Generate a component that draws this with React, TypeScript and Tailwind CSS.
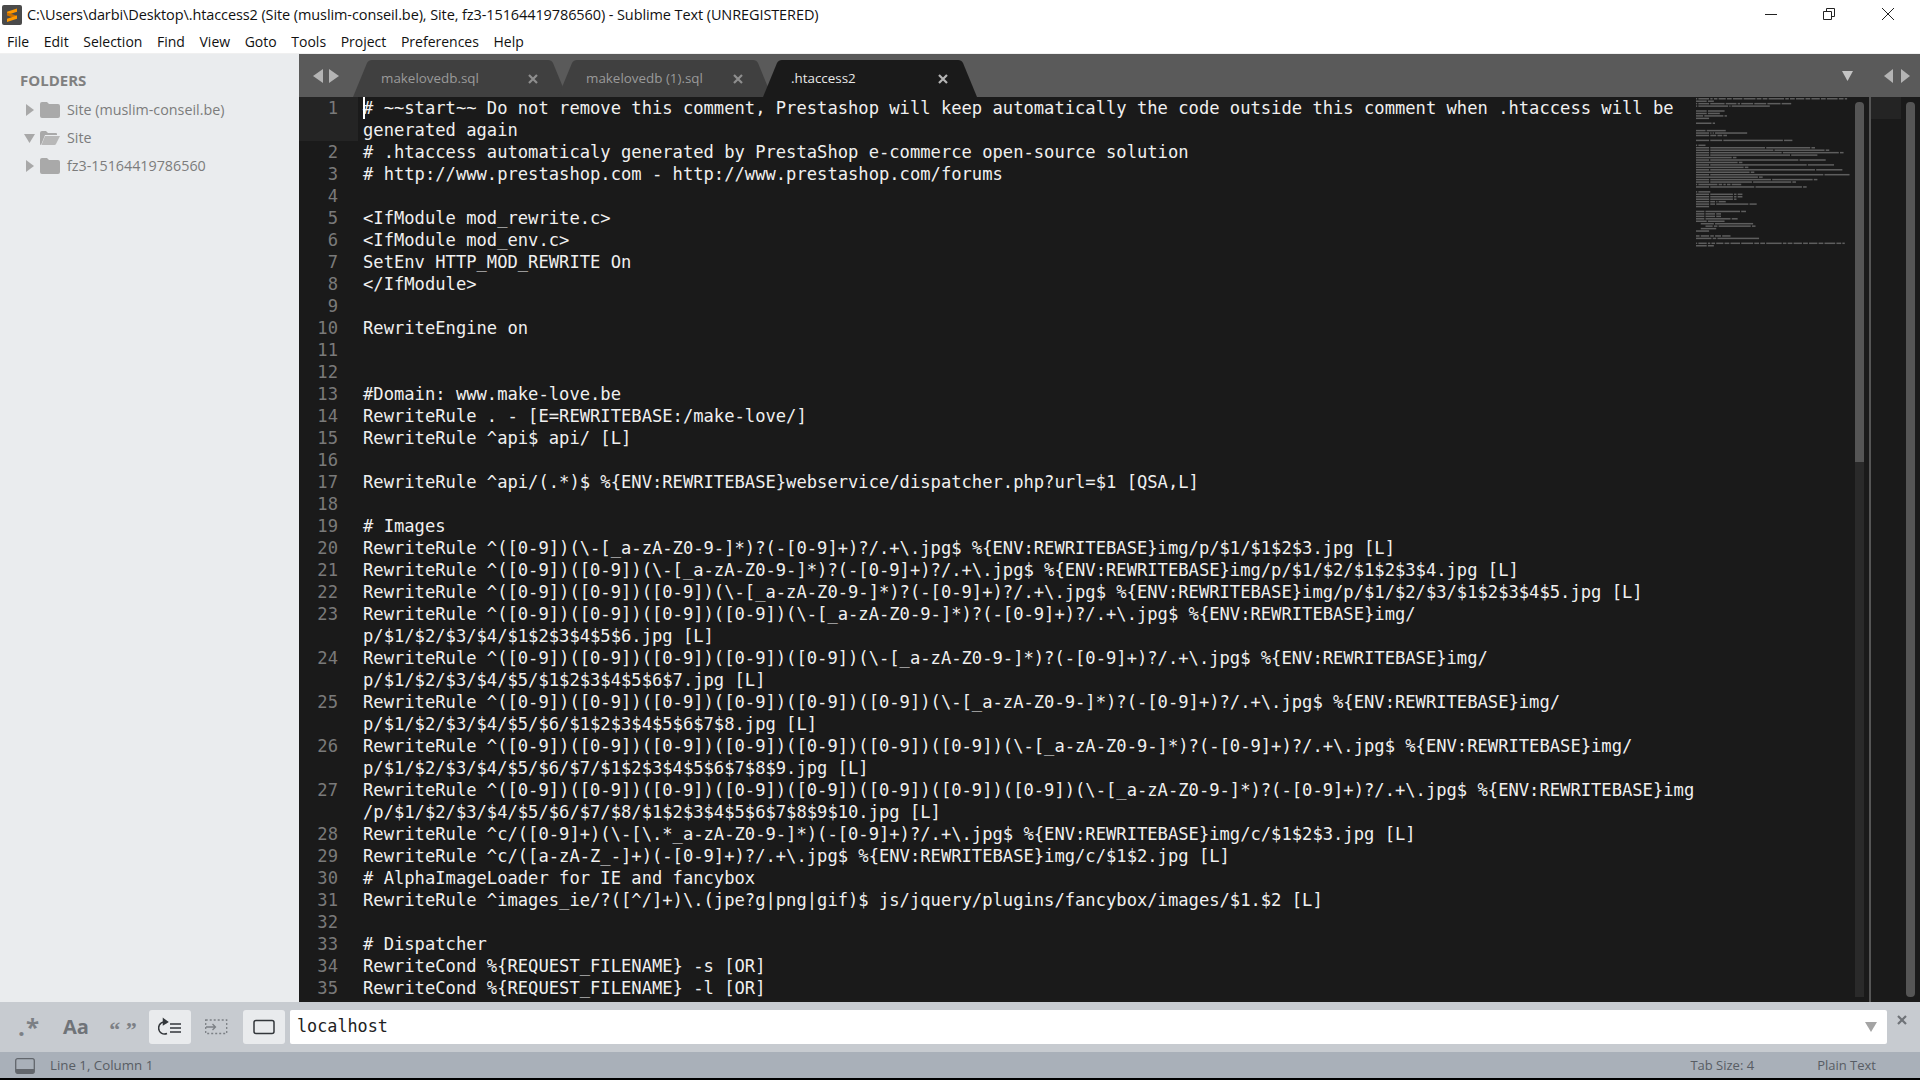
import React from 'react';

type Row = { n?: number; text: string };

// every visual row of the file, wrapped where the editor wraps it
const ROWS: Row[] = [
    { n: 1, text: '# ~~start~~ Do not remove this comment, Prestashop will keep automatically the code outside this comment when .htaccess will be' },
    { text: 'generated again' },
    { n: 2, text: '# .htaccess automaticaly generated by PrestaShop e-commerce open-source solution' },
    { n: 3, text: '# http://www.prestashop.com - http://www.prestashop.com/forums' },
    { n: 4, text: '' },
    { n: 5, text: '<IfModule mod_rewrite.c>' },
    { n: 6, text: '<IfModule mod_env.c>' },
    { n: 7, text: 'SetEnv HTTP_MOD_REWRITE On' },
    { n: 8, text: '</IfModule>' },
    { n: 9, text: '' },
    { n: 10, text: 'RewriteEngine on' },
    { n: 11, text: '' },
    { n: 12, text: '' },
    { n: 13, text: '#Domain: www.make-love.be' },
    { n: 14, text: 'RewriteRule . - [E=REWRITEBASE:/make-love/]' },
    { n: 15, text: 'RewriteRule ^api$ api/ [L]' },
    { n: 16, text: '' },
    { n: 17, text: 'RewriteRule ^api/(.*)$ %{ENV:REWRITEBASE}webservice/dispatcher.php?url=$1 [QSA,L]' },
    { n: 18, text: '' },
    { n: 19, text: '# Images' },
    { n: 20, text: 'RewriteRule ^([0-9])(\\-[_a-zA-Z0-9-]*)?(-[0-9]+)?/.+\\.jpg$ %{ENV:REWRITEBASE}img/p/$1/$1$2$3.jpg [L]' },
    { n: 21, text: 'RewriteRule ^([0-9])([0-9])(\\-[_a-zA-Z0-9-]*)?(-[0-9]+)?/.+\\.jpg$ %{ENV:REWRITEBASE}img/p/$1/$2/$1$2$3$4.jpg [L]' },
    { n: 22, text: 'RewriteRule ^([0-9])([0-9])([0-9])(\\-[_a-zA-Z0-9-]*)?(-[0-9]+)?/.+\\.jpg$ %{ENV:REWRITEBASE}img/p/$1/$2/$3/$1$2$3$4$5.jpg [L]' },
    { n: 23, text: 'RewriteRule ^([0-9])([0-9])([0-9])([0-9])(\\-[_a-zA-Z0-9-]*)?(-[0-9]+)?/.+\\.jpg$ %{ENV:REWRITEBASE}img/' },
    { text: 'p/$1/$2/$3/$4/$1$2$3$4$5$6.jpg [L]' },
    { n: 24, text: 'RewriteRule ^([0-9])([0-9])([0-9])([0-9])([0-9])(\\-[_a-zA-Z0-9-]*)?(-[0-9]+)?/.+\\.jpg$ %{ENV:REWRITEBASE}img/' },
    { text: 'p/$1/$2/$3/$4/$5/$1$2$3$4$5$6$7.jpg [L]' },
    { n: 25, text: 'RewriteRule ^([0-9])([0-9])([0-9])([0-9])([0-9])([0-9])(\\-[_a-zA-Z0-9-]*)?(-[0-9]+)?/.+\\.jpg$ %{ENV:REWRITEBASE}img/' },
    { text: 'p/$1/$2/$3/$4/$5/$6/$1$2$3$4$5$6$7$8.jpg [L]' },
    { n: 26, text: 'RewriteRule ^([0-9])([0-9])([0-9])([0-9])([0-9])([0-9])([0-9])(\\-[_a-zA-Z0-9-]*)?(-[0-9]+)?/.+\\.jpg$ %{ENV:REWRITEBASE}img/' },
    { text: 'p/$1/$2/$3/$4/$5/$6/$7/$1$2$3$4$5$6$7$8$9.jpg [L]' },
    { n: 27, text: 'RewriteRule ^([0-9])([0-9])([0-9])([0-9])([0-9])([0-9])([0-9])([0-9])(\\-[_a-zA-Z0-9-]*)?(-[0-9]+)?/.+\\.jpg$ %{ENV:REWRITEBASE}img' },
    { text: '/p/$1/$2/$3/$4/$5/$6/$7/$8/$1$2$3$4$5$6$7$8$9$10.jpg [L]' },
    { n: 28, text: 'RewriteRule ^c/([0-9]+)(\\-[\\.*_a-zA-Z0-9-]*)(-[0-9]+)?/.+\\.jpg$ %{ENV:REWRITEBASE}img/c/$1$2$3.jpg [L]' },
    { n: 29, text: 'RewriteRule ^c/([a-zA-Z_-]+)(-[0-9]+)?/.+\\.jpg$ %{ENV:REWRITEBASE}img/c/$1$2.jpg [L]' },
    { n: 30, text: '# AlphaImageLoader for IE and fancybox' },
    { n: 31, text: 'RewriteRule ^images_ie/?([^/]+)\\.(jpe?g|png|gif)$ js/jquery/plugins/fancybox/images/$1.$2 [L]' },
    { n: 32, text: '' },
    { n: 33, text: '# Dispatcher' },
    { n: 34, text: 'RewriteCond %{REQUEST_FILENAME} -s [OR]' },
    { n: 35, text: 'RewriteCond %{REQUEST_FILENAME} -l [OR]' },
    { text: 'RewriteCond %{REQUEST_FILENAME} -d' },
    { text: 'RewriteRule ^.*$ - [NC,L]' },
    { text: 'RewriteRule ^.*$ %{ENV:REWRITEBASE}index.php [NC,L]' },
    { text: '</IfModule>' },
    { text: '' },
    { text: 'AddType application/vnd.ms-fontobject .eot' },
    { text: 'AddType font/ttf .ttf' },
    { text: 'AddType font/otf .otf' },
    { text: 'AddType application/font-woff .woff' },
    { text: '<IfModule mod_headers.c>' },
    { text: '    <FilesMatch "\\.(ttf|ttc|otf|eot|woff|svg)$">' },
    { text: '        Header add Access-Control-Allow-Origin "*"' },
    { text: '    </FilesMatch>' },
    { text: '</IfModule>' },
    { text: '' },
    { text: '#If rewrite mod isn\'t enabled' },
    { text: 'ErrorDocument 404 /make-love/index.php?controller=404' },
    { text: '' },
    { text: '# ~~end~~ Do not remove this comment, Prestashop will keep automatically the code outside this comment when .htaccess will be' },
    { text: 'generated again' },
];

const VISIBLE_ROWS = 41;
const MENU = ['File', 'Edit', 'Selection', 'Find', 'View', 'Goto', 'Tools', 'Project', 'Preferences', 'Help'];

const CloseX: React.FC<{ className?: string }> = ({ className }) => (
    <svg width="10" height="10" viewBox="0 0 10 10" className={className}>
        <path d="M1 1l8 8M9 1l-8 8" stroke="currentColor" strokeWidth="2.2" fill="none" />
    </svg>
);

const Tab: React.FC<{ label: string; active?: boolean }> = ({ label, active }) => (
    <div className="relative w-[214px] h-[37px] -mr-[9px] flex items-center shrink-0">
        <svg width="214" height="37" viewBox="0 0 214 37" className={`absolute inset-0 ${active ? 'text-[#1a1a1a]' : 'text-[#404040]'}`}>
            <path d="M0 37L14 3Q15.5 0 19 0H195Q198.5 0 200 3L214 37Z" fill="currentColor" />
        </svg>
        <span className={`relative ml-[28px] w-[147px] text-[13.4px] ${active ? 'text-[#e8e8e8]' : 'text-[#9a9a9a]'}`}>{label}</span>
        <CloseX className={`relative ${active ? 'text-[#b4b4b4]' : 'text-[#8e8e8e]'}`} />
    </div>
);

const FolderRow: React.FC<{ label: string; open?: boolean }> = ({ label, open }) => (
    <div className="h-[28px] flex items-center pl-[24px] text-[14.3px] text-[#7c7c7c]">
        {open ? (
            <svg width="11" height="10" viewBox="0 0 11 10" className="mr-[5px]"><path d="M0 1h11L5.5 10z" fill="#a8a8a8" /></svg>
        ) : (
            <svg width="11" height="12" viewBox="0 0 11 12" className="mr-[5px]"><path d="M2 0l8 6-8 6z" fill="#a8a8a8" /></svg>
        )}
        {open ? (
            <svg width="20" height="16" viewBox="0 0 20 16" className="mr-[7px]">
                <path d="M0 3q0-2 2-2h4l2 2h8q1 0 1 1v1H5L1 15H1q-1 0-1-1z" fill="#a9a9a9" />
                <path d="M5 6h15l-4 8q-.5 1-1.500 1H1.500z" fill="#b8b8b8" />
            </svg>
        ) : (
            <svg width="20" height="16" viewBox="0 0 20 16" className="mr-[7px]">
                <path d="M0 2q0-2 2-2h5l2 2h9q2 0 2 2v10q0 2-2 2H2q-2 0-2-2z" fill="#a9a9a9" />
            </svg>
        )}
        <span>{label}</span>
    </div>
);

const Minimap: React.FC = () => (
    <svg width="159" height="905" viewBox="0 0 159 905" className="shrink-0">
        {ROWS.map((row, i) => {
            const parts: React.ReactNode[] = [];
            const re = /\S+/g;
            let m: RegExpExecArray | null;
            while ((m = re.exec(row.text))) {
                parts.push(<rect key={m.index} x={m.index * 1.19} y={i * 2.45 + 1} width={m[0].length * 1.19} height="1.5" fill="#8c8c8c" opacity="0.6" />);
            }
            return <g key={i}>{parts}</g>;
        })}
    </svg>
);

const FindToggle: React.FC<{ on?: boolean; children: React.ReactNode }> = ({ on, children }) => (
    <div className={`w-[42px] h-[34px] rounded-[3px] flex items-center justify-center shrink-0 ${on ? 'bg-[#e9ebed]' : ''}`}>{children}</div>
);

const App: React.FC = () => (
    <div className="w-[1920px] h-[1080px] overflow-hidden flex flex-col bg-black font-['Open_Sans',sans-serif]">
        {/* title bar */}
        <div className="h-[29px] bg-white flex items-center shrink-0">
            <svg width="20" height="20" viewBox="0 0 20 20" className="ml-[2px] mr-[5px]">
                <rect width="20" height="20" rx="2" fill="#4a4a4a" />
                <path d="M15 3.500v3.200L5 10V6.800z" fill="#ff9800" />
                <path d="M5 7.500l10 3.300v3L5 10.500z" fill="#c96f00" />
                <path d="M15 10.500v3.200L5 17v-3.200z" fill="#ff9800" />
            </svg>
            <span className="text-[14.5px] text-[#111] tracking-[-0.1px] whitespace-pre">C:\Users\darbi\Desktop\.htaccess2 (Site (muslim-conseil.be), Site, fz3-15164419786560) - Sublime Text (UNREGISTERED)</span>
            <div className="ml-auto flex items-center -mt-[2px]">
                <svg width="12" height="12" viewBox="0 0 12 12" className="mr-[46px]"><path d="M0 6.500h12" stroke="#222" /></svg>
                <svg width="12" height="12" viewBox="0 0 12 12" className="mr-[47px]"><path d="M.5 3.500h8v8h-8zM3.500 3.500v-3h8v8h-3" stroke="#222" fill="none" /></svg>
                <svg width="12" height="12" viewBox="0 0 12 12" className="mr-[26px]"><path d="M0 0l12 12M12 0L0 12" stroke="#222" /></svg>
            </div>
        </div>

        {/* menu */}
        <div className="h-[25px] bg-white flex items-center gap-[14.6px] pl-[7px] text-[14px] text-[#111] shrink-0 border-b border-[#f0f0f0]">
            {MENU.map(item => <span key={item}>{item}</span>)}
        </div>

        <div className="flex flex-1 min-h-0">
            {/* sidebar */}
            <div className="w-[299px] bg-[#eaecee] shrink-0 pt-[17px]">
                <div className="pl-[20px] text-[15px] font-bold text-[#808080] mb-[6px] h-[19px] leading-[19px]">FOLDERS</div>
                <FolderRow label="Site (muslim-conseil.be)" />
                <FolderRow label="Site" open />
                <FolderRow label="fz3-15164419786560" />
            </div>

            <div className="flex-1 min-w-0 flex flex-col">
                {/* tab strip */}
                <div className="h-[43px] bg-[#5a5a5a] flex items-end shrink-0">
                    <div className="self-center flex items-center gap-[6px] ml-[14px] mr-[14px]">
                        <svg width="10" height="14" viewBox="0 0 10 14"><path d="M10 0v14L0 7z" fill="#b4b4b4" /></svg>
                        <svg width="10" height="14" viewBox="0 0 10 14"><path d="M0 0v14l10-7z" fill="#b4b4b4" /></svg>
                    </div>
                    <Tab label="makelovedb.sql" />
                    <Tab label="makelovedb (1).sql" />
                    <Tab label=".htaccess2" active />
                    <div className="self-center ml-auto flex items-center">
                        <svg width="11" height="10" viewBox="0 0 11 10" className="mr-[31px]"><path d="M0 0h11L5.500 10z" fill="#c4c4c4" /></svg>
                        <svg width="9" height="14" viewBox="0 0 9 14" className="mr-[8px]"><path d="M9 0v14L0 7z" fill="#b4b4b4" /></svg>
                        <svg width="9" height="14" viewBox="0 0 9 14" className="mr-[10px]"><path d="M0 0v14l9-7z" fill="#b4b4b4" /></svg>
                    </div>
                </div>

                {/* editor */}
                <div className="flex-1 min-h-0 bg-[#1a1a1a] flex overflow-hidden">
                    <div className="w-[1397px] shrink-0 font-['DejaVu_Sans_Mono',monospace] text-[17.15px] leading-[22px]">
                        {ROWS.slice(0, VISIBLE_ROWS).map((row, i) => (
                            <div key={i} className="flex h-[22px]">
                                <div className={`w-[59px] pr-[20px] text-right text-[#7a7a7a] shrink-0 ${i < 2 ? 'bg-[#242424]' : ''}`}>{row.n}</div>
                                <div className="relative ml-[5px] whitespace-pre text-[#f0f0f0]">
                                    {i === 0 && <div className="absolute left-0 top-0 w-[2px] h-[22px] bg-white" />}
                                    {row.text}
                                </div>
                            </div>
                        ))}
                    </div>
                    <Minimap />
                    <div className="w-[9px] mt-[5px] mb-[5px] shrink-0 flex flex-col rounded-t-[4px] overflow-hidden">
                        <div className="h-[360px] bg-[#555555]" />
                        <div className="flex-1 bg-[#2a2a2a]" />
                    </div>
                    <div className="w-[2px] ml-[5px] bg-[#555555] shrink-0" />
                    <div className="w-[30px] h-[22px] bg-[#242424] shrink-0" />
                    <div className="w-[9px] ml-[5px] mt-[5px] mb-[5px] bg-[#555555] rounded-[4px] shrink-0" />
                </div>
            </div>
        </div>

        {/* find panel */}
        <div className="h-[50px] bg-[#c7cbd0] flex items-center pl-[8px] shrink-0">
            <div className="flex items-center gap-[5px]">
                <FindToggle><span className="text-[24px] font-bold text-[#7c8085] leading-none tracking-[1px]">.*</span></FindToggle>
                <FindToggle><span className="text-[20px] font-bold text-[#6f7378] leading-none">Aa</span></FindToggle>
                <FindToggle><span className="text-[22px] font-bold text-[#7c8085] leading-none font-['Liberation_Serif',serif] mt-[6px]">“ ”</span></FindToggle>
                <FindToggle on>
                    <svg width="24" height="20" viewBox="0 0 24 20" fill="none" stroke="#33373b" strokeWidth="1.500">
                        <path d="M9 5.500A6 6 0 1 0 9 16.500" />
                        <path d="M5.500 2l4 3-4 2.500z" fill="#33373b" />
                        <path d="M12 7h11M12 11h11M12 15h11" />
                    </svg>
                </FindToggle>
                <FindToggle>
                    <svg width="24" height="16" viewBox="0 0 24 16" fill="none" stroke="#7c8085" strokeWidth="1.300">
                        <rect x=".7" y="1" width="21" height="13.500" strokeDasharray="2 2" />
                        <path d="M1 8h9M7.500 5l3 3-3 3" />
                    </svg>
                </FindToggle>
                <FindToggle on>
                    <svg width="22" height="16" viewBox="0 0 22 16" fill="none" stroke="#33373b" strokeWidth="1.500"><rect x="1" y="1.500" width="20" height="13" rx="2" /></svg>
                </FindToggle>
            </div>
            <div className="ml-[5px] w-[1597px] h-[34px] bg-white rounded-[2px] flex items-center justify-between pl-[7px] pr-[10px]">
                <span className="font-['DejaVu_Sans_Mono',monospace] text-[16.800px] text-[#222]">localhost</span>
                <svg width="12" height="10" viewBox="0 0 12 10"><path d="M0 0h12L6 10z" fill="#a4a4a4" /></svg>
            </div>
            <CloseX className="ml-[10px] -mt-[14px] text-[#6f7378]" />
        </div>

        {/* status bar */}
        <div className="h-[26px] bg-[#a9b0b9] flex items-center pt-[1px] text-[13.300px] text-[#585d64] pl-[15px] pr-[44px] shrink-0">
            <svg width="20" height="16" viewBox="0 0 20 16" className="mr-[15px]">
                <rect x=".7" y=".7" width="18.600" height="14.600" rx="2" fill="none" stroke="#62666c" strokeWidth="1.300" />
                <path d="M1 11h18v2.500q0 2-2 2H3q-2 0-2-2z" fill="#62666c" />
            </svg>
            <span>Line 1, Column 1</span>
            <span className="ml-auto text-[13px]">Tab Size: 4</span>
            <span className="ml-[63px] text-[13px]">Plain Text</span>
        </div>
        <div className="h-[2px] bg-black shrink-0" />
    </div>
);

export default App;
